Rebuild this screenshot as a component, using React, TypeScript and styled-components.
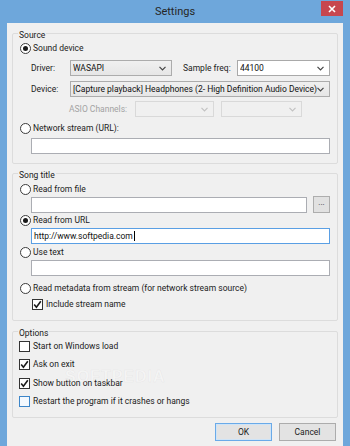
import React from "react";
import styled, { createGlobalStyle } from "styled-components";

const FONT = `Roboto, "Noto Sans", "Liberation Sans", sans-serif`;

const GlobalStyle = createGlobalStyle`
  html, body { margin: 0; padding: 0; background: #6ea7db; }
  body { width: 350px; height: 446px; overflow: hidden; font-family: ${FONT}; font-size: 8.5px; color: #1b1b1b; }
  * { box-sizing: border-box; }
`;

const Frame = styled.div`
  width: 350px;
  height: 446px;
  background: #6ea7db;
  display: flex;
  flex-direction: column;
  padding: 0 7px 7px;
`;

const TitleBar = styled.div`
  height: 23px;
  display: grid;
  grid-template-columns: 1fr auto 1fr;
  align-items: center;
`;

const Title = styled.div`
  grid-column: 2;
  font-size: 11px;
  color: #262626;
  line-height: 23px;
  padding-bottom: 1px;
`;

const CloseButton = styled.div`
  grid-column: 3;
  justify-self: end;
  align-self: start;
  margin-top: 1px;
  width: 22px;
  height: 15px;
  background: #c7474e;
  display: flex;
  align-items: center;
  justify-content: center;
`;

const Client = styled.div`
  flex: 1;
  position: relative;
  background: #f0f0f0;
  padding: 2px 5px 7px;
  display: flex;
  flex-direction: column;
`;

const Group = styled.fieldset<{ $mt?: number }>`
  margin: ${(p) => p.$mt ?? 0}px 0 0;
  border: 1px solid #dcdcdc;
  border-radius: 2px;
  padding: 0 7px 9px;
  min-width: 0;
  display: flex;
  flex-direction: column;
`;

const GroupBody = styled.div`
  display: flex;
  flex-direction: column;
`;

const Legend = styled.legend`
  padding: 4px 1px 0;
  margin-left: -2px;
  line-height: 12px;
  font-size: 8.5px;
  color: #1b1b1b;
`;

const OptRow = styled.label<{ $mt?: number; $indent?: number }>`
  display: flex;
  align-items: center;
  height: 14px;
  gap: 1px;
  margin-top: ${(p) => p.$mt ?? 0}px;
  margin-left: ${(p) => p.$indent ?? 0}px;
  white-space: nowrap;
`;

const RadioCircle = styled.span<{ $on?: boolean }>`
  width: 11px;
  height: 11px;
  border-radius: 50%;
  border: 1px solid #3c3c3c;
  background: #fff;
  display: flex;
  align-items: center;
  justify-content: center;
  margin-right: 1px;
  &::after {
    content: "";
    display: ${(p) => (p.$on ? "block" : "none")};
    width: 5px;
    height: 5px;
    border-radius: 50%;
    background: #1a1a1a;
  }
`;

const CheckBox = styled.span<{ $hover?: boolean }>`
  width: 11px;
  height: 11px;
  margin-left: -1px;
  margin-right: 2px;
  border: 1px solid ${(p) => (p.$hover ? "#3d86c9" : "#333")};
  background: ${(p) => (p.$hover ? "#f4f9fe" : "#fff")};
  display: flex;
  align-items: center;
  justify-content: center;
`;

const FieldRow = styled.div<{ $mt?: number; $indent?: number }>`
  display: flex;
  align-items: center;
  height: 16px;
  margin-top: ${(p) => p.$mt ?? 0}px;
  margin-left: ${(p) => p.$indent ?? 11}px;
`;

const FieldLabel = styled.span<{ $w: number; $disabled?: boolean; $ml?: number }>`
  width: ${(p) => p.$w}px;
  flex: none;
  margin-left: ${(p) => p.$ml ?? 0}px;
  color: ${(p) => (p.$disabled ? "#a3a3a3" : "#1b1b1b")};
  white-space: nowrap;
`;

const Select = styled.div<{ $w: number; $variant?: "list" | "edit" | "disabled"; $ml?: number }>`
  width: ${(p) => p.$w}px;
  height: 16px;
  flex: none;
  margin-left: ${(p) => p.$ml ?? 0}px;
  border: 1px solid
    ${(p) => (p.$variant === "disabled" ? "#d9d9d9" : p.$variant === "edit" ? "#a9a9a9" : "#acacac")};
  background: ${(p) =>
    p.$variant === "edit" ? "#fff" : p.$variant === "disabled" ? "#f0f0f0" : "linear-gradient(#f0f0f0, #e6e6e6)"};
  display: flex;
  align-items: center;
  padding: 0 5px 0 2px;
  color: ${(p) => (p.$variant === "disabled" ? "#a0a0a0" : "#111")};
`;

const SelectText = styled.span`
  flex: 1;
  overflow: hidden;
  white-space: nowrap;
`;

const TextInput = styled.div<{ $w?: number; $focus?: boolean; $mt?: number }>`
  width: ${(p) => p.$w ?? 299}px;
  height: 16px;
  flex: none;
  margin-top: ${(p) => p.$mt ?? 0}px;
  margin-left: 11px;
  border: 1px solid ${(p) => (p.$focus ? "#5a9fe4" : "#abadb3")};
  background: #fff;
  display: flex;
  align-items: center;
  padding: 0 2px;
  color: #111;
  white-space: nowrap;
`;

const Caret = styled.span`
  display: inline-block;
  width: 1px;
  height: 10px;
  background: #000;
  margin-left: 1px;
`;

const FileRow = styled.div<{ $mt?: number }>`
  display: flex;
  align-items: center;
  gap: 6px;
  height: 17px;
  margin-top: ${(p) => p.$mt ?? 0}px;
`;

const BrowseButton = styled.div`
  width: 17px;
  height: 17px;
  border: 1px solid #adadad;
  background: #e1e1e1;
  display: flex;
  align-items: center;
  justify-content: center;
  font-size: 8px;
  line-height: 1;
  padding-bottom: 3px;
  color: #333;
`;

const ButtonRow = styled.div`
  display: flex;
  justify-content: flex-end;
  gap: 7px;
  margin: 5px 2px 0 0;
`;

const PushButton = styled.div<{ $default?: boolean }>`
  width: 57px;
  height: 18px;
  border: 1px solid ${(p) => (p.$default ? "#6aaae8" : "#acacac")};
  box-shadow: ${(p) => (p.$default ? "inset 0 0 0 1px #cfe4f7" : "none")};
  background: #e3e3e3;
  display: flex;
  align-items: center;
  justify-content: center;
  color: #1b1b1b;
`;

const Watermark = styled.div`
  position: absolute;
  left: 58px;
  top: 345px;
  font-size: 16px;
  font-weight: 700;
  letter-spacing: 1px;
  color: rgba(255, 255, 255, 0.3);
  -webkit-text-stroke: 0.5px rgba(160, 160, 160, 0.14);
  pointer-events: none;
  font-family: "Liberation Sans", sans-serif;
`;

const Chevron = ({ color = "#444" }: { color?: string }) => (
  <svg width="7" height="5" viewBox="0 0 7 5">
    <polyline points="0.5,0.8 3.5,3.8 6.5,0.8" fill="none" stroke={color} strokeWidth="1.2" />
  </svg>
);

const Check = () => (
  <svg width="9" height="9" viewBox="0 0 9 9">
    <polyline points="1.2,4.6 3.4,7.2 7.8,1.2" fill="none" stroke="#1a1a1a" strokeWidth="1.6" />
  </svg>
);

const Radio = ({ on, label, mt, indent }: { on?: boolean; label: string; mt?: number; indent?: number }) => (
  <OptRow $mt={mt} $indent={indent}>
    <RadioCircle $on={on} />
    <span>{label}</span>
  </OptRow>
);

const CheckOpt = ({
  on,
  hover,
  label,
  mt,
  indent,
}: {
  on?: boolean;
  hover?: boolean;
  label: string;
  mt?: number;
  indent?: number;
}) => (
  <OptRow $mt={mt} $indent={indent}>
    <CheckBox $hover={hover}>{on && <Check />}</CheckBox>
    <span>{label}</span>
  </OptRow>
);

export default function App() {
  return (
    <>
      <GlobalStyle />
      <Frame>
        <TitleBar>
          <Title>Settings</Title>
          <CloseButton>
            <svg width="8" height="8" viewBox="0 0 8 8">
              <path d="M1 1 L7 7 M7 1 L1 7" stroke="#fff" strokeWidth="1.6" />
            </svg>
          </CloseButton>
        </TitleBar>
        <Client>
          <Group>
            <Legend>Source</Legend>
            <GroupBody>
              <Radio on label="Sound device" />
              <FieldRow $mt={5}>
                <FieldLabel $w={39}>Driver:</FieldLabel>
                <Select $w={102}>
                  <SelectText>WASAPI</SelectText>
                  <Chevron />
                </Select>
                <FieldLabel $w={54} $ml={11}>
                  Sample freq:
                </FieldLabel>
                <Select $w={93} $variant="edit">
                  <SelectText>44100</SelectText>
                  <Chevron />
                </Select>
              </FieldRow>
              <FieldRow $mt={5}>
                <FieldLabel $w={39}>Device:</FieldLabel>
                <Select $w={260}>
                  <SelectText>[Capture playback] Headphones (2- High Definition Audio Device)</SelectText>
                  <Chevron />
                </Select>
              </FieldRow>
              <FieldRow $mt={4} $indent={49}>
                <FieldLabel $w={66} $disabled>
                  ASIO Channels:
                </FieldLabel>
                <Select $w={79} $variant="disabled">
                  <SelectText />
                  <Chevron color="#c2c2c2" />
                </Select>
                <Select $w={81} $variant="disabled" $ml={7}>
                  <SelectText />
                  <Chevron color="#c2c2c2" />
                </Select>
              </FieldRow>
              <Radio mt={4} label="Network stream (URL):" />
              <TextInput $mt={3} />
            </GroupBody>
          </Group>

          <Group $mt={1}>
            <Legend>Song title</Legend>
            <GroupBody>
              <Radio mt={1} label="Read from file" />
              <FileRow>
                <TextInput $w={276} />
                <BrowseButton>...</BrowseButton>
              </FileRow>
              <Radio on label="Read from URL" />
              <TextInput $mt={1} $focus>
                http://www.softpedia.com
                <Caret />
              </TextInput>
              <Radio mt={1} label="Use text" />
              <TextInput $mt={1} />
              <Radio mt={5} label="Read metadata from stream (for network stream source)" />
              <CheckOpt mt={2} indent={13} on label="Include stream name" />
            </GroupBody>
          </Group>

          <Group $mt={2}>
            <Legend>Options</Legend>
            <GroupBody>
              <CheckOpt label="Start on Windows load" />
              <CheckOpt mt={4} on label="Ask on exit" />
              <CheckOpt mt={5} on label="Show button on taskbar" />
              <CheckOpt mt={4} hover label="Restart the program if it crashes or hangs" />
            </GroupBody>
          </Group>

          <ButtonRow>
            <PushButton $default>OK</PushButton>
            <PushButton>Cancel</PushButton>
          </ButtonRow>
          <Watermark>SOFTPEDIA</Watermark>
        </Client>
      </Frame>
    </>
  );
}
